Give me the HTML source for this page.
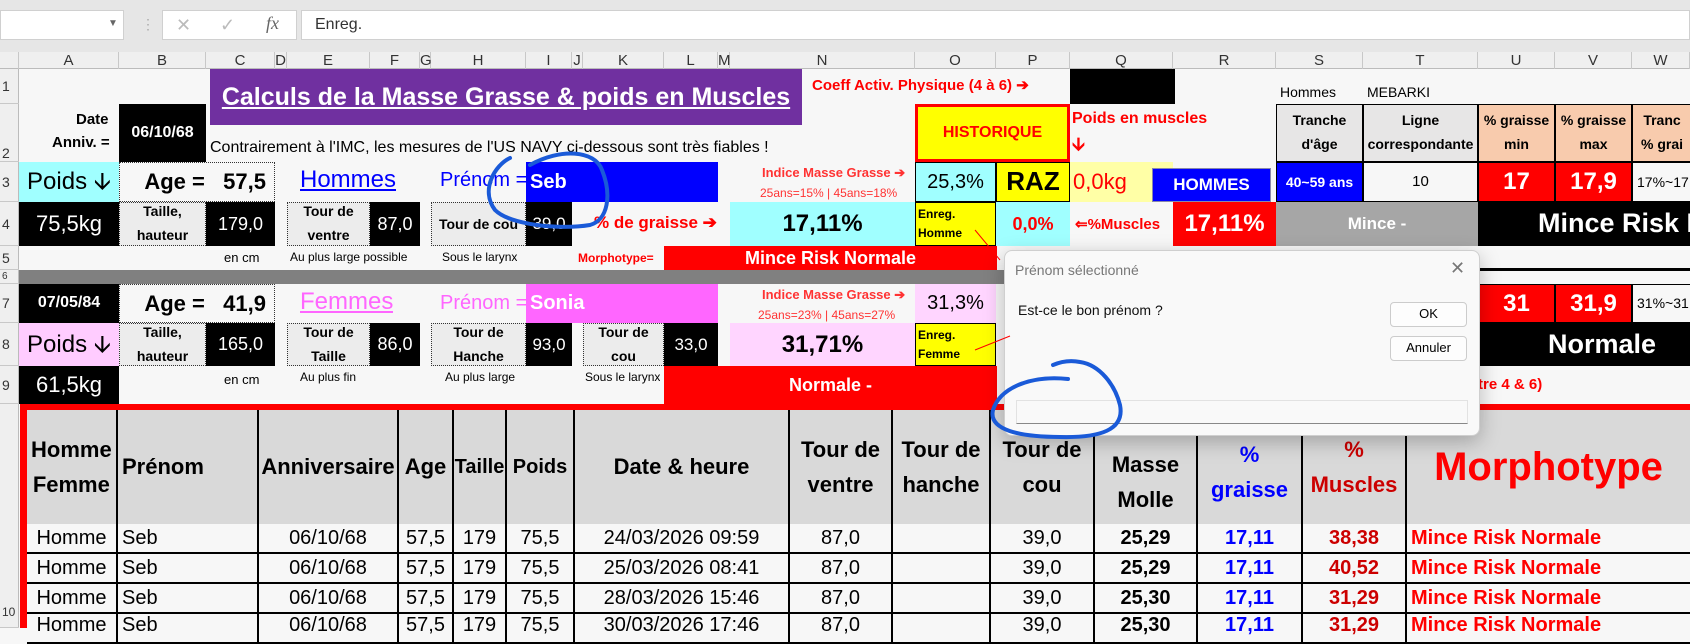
<!DOCTYPE html>
<html><head><meta charset="utf-8"><style>
*{margin:0;padding:0;box-sizing:border-box}
body{width:1690px;height:628px;overflow:hidden;background:#f7f7f7;font-family:"Liberation Sans",sans-serif;position:relative}
.a{position:absolute;white-space:nowrap;overflow:hidden}
.c{position:absolute;display:flex;align-items:center;justify-content:center;text-align:center;white-space:nowrap;overflow:hidden;line-height:1.15}
.b{font-weight:bold}
.ch{position:absolute;top:52px;height:17px;font-size:15px;color:#333;text-align:center;border-right:1px solid #c8c8c8;line-height:17px}
.rh{position:absolute;left:0;width:19px;font-size:14px;color:#333;border-bottom:1px solid #c8c8c8;display:flex;align-items:center;padding-left:2px}
.dot{border:1px dotted #333;background:#ececec}
.blk{background:#000;color:#fff}
.th{position:absolute;top:410px;height:114px;background:#d9d9d9;border-right:2px solid #000;display:flex;align-items:center;justify-content:center;text-align:center;font-weight:bold;font-size:22px;line-height:1.6}
.td{position:absolute;height:30px;border-right:2px solid #000;border-bottom:2px solid #000;font-size:20px;display:flex;align-items:center;justify-content:center;background:#f7f7f7}
</style></head><body>
<!-- top UI -->
<div class="a" style="left:0;top:0;width:1690px;height:52px;background:#e6e6e6"></div>
<div class="a" style="left:0;top:10px;width:124px;height:30px;background:#fff;border:1px solid #d0d0d0"></div>
<div class="a" style="left:108px;top:18px;font-size:10px;color:#666">▼</div>
<div class="a" style="left:141px;top:16px;font-size:14px;color:#aaa">⋮</div>
<div class="a" style="left:162px;top:10px;width:135px;height:30px;background:#fff;border:1px solid #d0d0d0"></div>
<div class="a" style="left:176px;top:15px;font-size:18px;color:#bbb">✕</div>
<div class="a" style="left:220px;top:15px;font-size:18px;color:#bbb">✓</div>
<div class="a" style="left:266px;top:13px;font-size:18px;color:#666;font-family:'Liberation Serif',serif;font-style:italic">fx</div>
<div class="a" style="left:301px;top:10px;width:1389px;height:30px;background:#fff;border:1px solid #d0d0d0"></div>
<div class="a" style="left:315px;top:16px;font-size:16px;color:#333">Enreg.</div>
<!-- column headers -->
<div class="a" style="left:0;top:52px;width:1690px;height:17px;background:#efefef;border-bottom:1px solid #bbb"></div>
<div class="ch" style="left:0;width:19px"></div>
<div class="ch" style="left:19px;width:100px">A</div><div class="ch" style="left:119px;width:87px">B</div>
<div class="ch" style="left:206px;width:69px">C</div><div class="ch" style="left:275px;width:12px">D</div>
<div class="ch" style="left:287px;width:83px">E</div><div class="ch" style="left:370px;width:50px">F</div>
<div class="ch" style="left:420px;width:11px">G</div><div class="ch" style="left:431px;width:95px">H</div>
<div class="ch" style="left:526px;width:46px">I</div><div class="ch" style="left:572px;width:11px">J</div>
<div class="ch" style="left:583px;width:81px">K</div><div class="ch" style="left:664px;width:54px">L</div>
<div class="ch" style="left:718px;width:12px">M</div><div class="ch" style="left:730px;width:185px">N</div>
<div class="ch" style="left:915px;width:81px">O</div><div class="ch" style="left:996px;width:74px">P</div>
<div class="ch" style="left:1070px;width:103px">Q</div><div class="ch" style="left:1173px;width:103px">R</div>
<div class="ch" style="left:1276px;width:87px">S</div><div class="ch" style="left:1363px;width:115px">T</div>
<div class="ch" style="left:1478px;width:77px">U</div><div class="ch" style="left:1555px;width:77px">V</div>
<div class="ch" style="left:1632px;width:58px">W</div>
<!-- row headers -->
<div class="a" style="left:0;top:69px;width:19px;height:559px;background:#efefef;border-right:1px solid #bbb"></div>
<div class="rh" style="top:69px;height:35px">1</div><div class="rh" style="top:104px;height:58px;align-items:flex-end">2</div>
<div class="rh" style="top:162px;height:40px">3</div><div class="rh" style="top:202px;height:44px">4</div>
<div class="rh" style="top:246px;height:24px">5</div><div class="rh" style="top:270px;height:14px;font-size:10px">6</div>
<div class="rh" style="top:284px;height:39px">7</div><div class="rh" style="top:323px;height:43px">8</div>
<div class="rh" style="top:366px;height:38px">9</div><div class="rh" style="top:404px;height:224px;align-items:flex-end;padding-bottom:8px;font-size:12px">10</div>

<!-- row 1-2 -->
<div class="c b" style="left:210px;top:69px;width:592px;height:56px;background:#7030a0;color:#fff;font-size:25px;text-decoration:underline">Calculs de la Masse Grasse &amp; poids en Muscles</div>
<div class="a b" style="left:812px;top:76px;font-size:15px;color:#f00">Coeff Activ. Physique (4 à 6) ➔</div>
<div class="a" style="left:1070px;top:69px;width:105px;height:35px;background:#000"></div>
<div class="a" style="left:1280px;top:84px;font-size:14px">Hommes</div>
<div class="a" style="left:1367px;top:84px;font-size:14px">MEBARKI</div>
<div class="a b" style="left:76px;top:111px;font-size:15px">Date</div>
<div class="a b" style="left:52px;top:134px;font-size:15px">Anniv. =</div>
<div class="c blk b" style="left:119px;top:104px;width:87px;height:58px;font-size:16px">06/10/68</div>
<div class="a" style="left:210px;top:139px;font-size:16px">Contrairement à l'IMC, les mesures de l'US NAVY ci-dessous sont très fiables !</div>
<div class="c b" style="left:915px;top:104px;width:155px;height:58px;background:#ff0;border:3px solid #f00;color:#f00;font-size:16px">HISTORIQUE</div>
<div class="a b" style="left:1072px;top:110px;font-size:16px;color:#f00">Poids en muscles</div>
<div class="a b" style="left:1072px;top:132px;font-size:18px;color:#f00">🡫</div>
<div class="c b" style="left:1276px;top:104px;width:87px;height:58px;background:#e7e6e6;border:1px solid #000;font-size:14px;white-space:normal;line-height:1.7">Tranche<br>d'âge</div>
<div class="c b" style="left:1363px;top:104px;width:115px;height:58px;background:#e7e6e6;border:1px solid #000;font-size:14px;line-height:1.7">Ligne<br>correspondante</div>
<div class="c b" style="left:1478px;top:104px;width:77px;height:58px;background:#f8cbad;border:1px solid #000;font-size:14px;line-height:1.7">% graisse<br>min</div>
<div class="c b" style="left:1555px;top:104px;width:77px;height:58px;background:#f8cbad;border:1px solid #000;font-size:14px;line-height:1.7">% graisse<br>max</div>
<div class="c b" style="left:1632px;top:104px;width:70px;height:58px;background:#f8cbad;border:1px solid #000;font-size:14px;line-height:1.7;justify-content:flex-start;padding-left:8px">Tranc<br>% grai</div>

<!-- row 3-5 hommes -->
<div class="c" style="left:19px;top:162px;width:100px;height:40px;background:#a0ffff;font-size:24px">Poids 🡫</div>
<div class="c dot b" style="left:119px;top:162px;width:156px;height:40px;background:#f7f7f7;font-size:22px;justify-content:flex-end;padding-right:8px">Age =&nbsp;&nbsp; 57,5</div>
<div class="a" style="left:300px;top:166px;font-size:24px;color:#00f;text-decoration:underline">Hommes</div>
<div class="a" style="left:440px;top:169px;font-size:20px;color:#00f">Prénom =</div>
<div class="c b" style="left:526px;top:162px;width:192px;height:40px;background:#00f;color:#fff;font-size:20px;justify-content:flex-start;padding-left:4px">Seb</div>
<div class="a b" style="left:762px;top:165px;font-size:13px;color:#f33">Indice Masse Grasse ➔</div>
<div class="a" style="left:760px;top:186px;font-size:12px;color:#f33">25ans=15% | 45ans=18%</div>
<div class="c" style="left:915px;top:162px;width:81px;height:40px;background:#a0ffff;border:1px solid #000;font-size:20px">25,3%</div>
<div class="c b" style="left:996px;top:162px;width:74px;height:40px;background:#ff0;border:1px solid #000;font-size:26px">RAZ</div>
<div class="c" style="left:1070px;top:162px;width:103px;height:40px;background:#ffffa6;color:#f00;font-size:22px;justify-content:flex-start;padding-left:3px">0,0kg</div>
<div class="c b" style="left:1152px;top:168px;width:119px;height:34px;background:#00f;color:#fff;font-size:17px;border:1px solid #88a">HOMMES</div>
<div class="c b" style="left:1276px;top:162px;width:87px;height:40px;background:#00f;color:#fff;font-size:14px;border:1px solid #000">40~59 ans</div>
<div class="c" style="left:1363px;top:162px;width:115px;height:40px;border:1px solid #000;font-size:15px">10</div>
<div class="c b" style="left:1478px;top:162px;width:77px;height:40px;background:#f00;color:#fff;font-size:24px;border:1px solid #000">17</div>
<div class="c b" style="left:1555px;top:162px;width:77px;height:40px;background:#f00;color:#fff;font-size:24px;border:1px solid #000">17,9</div>
<div class="c" style="left:1632px;top:162px;width:70px;height:40px;border:1px solid #000;font-size:14px;justify-content:flex-start;padding-left:4px">17%~17</div>

<div class="c blk" style="left:19px;top:202px;width:100px;height:44px;font-size:22px">75,5kg</div>
<div class="c dot b" style="left:119px;top:202px;width:87px;height:44px;font-size:14px;line-height:1.7">Taille,<br>hauteur</div>
<div class="c blk" style="left:206px;top:202px;width:69px;height:44px;font-size:18px">179,0</div>
<div class="c dot b" style="left:287px;top:202px;width:83px;height:44px;font-size:14px;line-height:1.7">Tour de<br>ventre</div>
<div class="c blk" style="left:370px;top:202px;width:50px;height:44px;font-size:18px">87,0</div>
<div class="c dot b" style="left:431px;top:202px;width:95px;height:44px;font-size:14px">Tour de cou</div>
<div class="c blk" style="left:526px;top:202px;width:46px;height:44px;font-size:17px">39,0</div>
<div class="a b" style="left:594px;top:213px;font-size:17px;color:#f00">% de graisse ➔</div>
<div class="c b" style="left:730px;top:202px;width:185px;height:44px;background:#a0ffff;font-size:24px">17,11%</div>
<div class="a b" style="left:915px;top:202px;width:81px;height:44px;background:#ff0;border:1px solid #000;font-size:12px;padding:2px;line-height:1.6">Enreg.<br>Homme</div>
<div class="c b" style="left:996px;top:202px;width:74px;height:44px;background:#a0ffff;color:#f00;font-size:18px">0,0%</div>
<div class="a b" style="left:1075px;top:215px;font-size:15px;color:#f00">⇐%Muscles</div>
<div class="c b" style="left:1173px;top:202px;width:103px;height:44px;background:#f00;color:#fff;font-size:24px">17,11%</div>
<div class="c b" style="left:1276px;top:202px;width:202px;height:44px;background:#a6a6a6;color:#fff;font-size:17px">Mince -</div>
<div class="c b" style="left:1478px;top:202px;width:212px;height:44px;background:#000;color:#fff;font-size:27px;justify-content:flex-start;padding-left:60px">Mince Risk N</div>

<div class="a" style="left:224px;top:250px;font-size:13px">en cm</div>
<div class="a" style="left:290px;top:250px;font-size:12px">Au plus large possible</div>
<div class="a" style="left:442px;top:250px;font-size:12px">Sous le larynx</div>
<div class="a b" style="left:578px;top:251px;font-size:12px;color:#f00">Morphotype=</div>
<div class="c b" style="left:664px;top:246px;width:333px;height:24px;background:#f00;color:#fff;font-size:18px">Mince Risk Normale</div>
<!-- row 6 -->
<div class="a" style="left:19px;top:270px;width:1460px;height:14px;background:#808080"></div>
<div class="a" style="left:1478px;top:268px;width:212px;height:3px;background:#000"></div>

<!-- row 7-9 femmes -->
<div class="c blk b" style="left:19px;top:284px;width:100px;height:39px;font-size:16px">07/05/84</div>
<div class="c dot b" style="left:119px;top:284px;width:156px;height:39px;background:#f7f7f7;font-size:22px;justify-content:flex-end;padding-right:8px">Age =&nbsp;&nbsp; 41,9</div>
<div class="a" style="left:300px;top:288px;font-size:24px;color:#f6f;text-decoration:underline">Femmes</div>
<div class="a" style="left:440px;top:292px;font-size:20px;color:#f6f">Prénom =</div>
<div class="c b" style="left:526px;top:284px;width:192px;height:39px;background:#f6f;color:#fff;font-size:20px;justify-content:flex-start;padding-left:4px">Sonia</div>
<div class="a b" style="left:762px;top:287px;font-size:13px;color:#f33">Indice Masse Grasse ➔</div>
<div class="a" style="left:758px;top:308px;font-size:12px;color:#f33">25ans=23% | 45ans=27%</div>
<div class="c" style="left:915px;top:284px;width:81px;height:39px;background:#ffd5ff;font-size:20px">31,3%</div>
<div class="c b" style="left:1478px;top:284px;width:77px;height:39px;background:#f00;color:#fff;font-size:24px;border:1px solid #000">31</div>
<div class="c b" style="left:1555px;top:284px;width:77px;height:39px;background:#f00;color:#fff;font-size:24px;border:1px solid #000">31,9</div>
<div class="c" style="left:1632px;top:284px;width:70px;height:39px;border:1px solid #000;font-size:14px;justify-content:flex-start;padding-left:4px">31%~31</div>

<div class="c" style="left:19px;top:323px;width:100px;height:43px;background:#ffccff;font-size:24px">Poids 🡫</div>
<div class="c dot b" style="left:119px;top:323px;width:87px;height:43px;font-size:14px;line-height:1.7">Taille,<br>hauteur</div>
<div class="c blk" style="left:206px;top:323px;width:69px;height:43px;font-size:18px">165,0</div>
<div class="c dot b" style="left:287px;top:323px;width:83px;height:43px;font-size:14px;line-height:1.7">Tour de<br>Taille</div>
<div class="c blk" style="left:370px;top:323px;width:50px;height:43px;font-size:18px">86,0</div>
<div class="c dot b" style="left:431px;top:323px;width:95px;height:43px;font-size:14px;line-height:1.7">Tour de<br>Hanche</div>
<div class="c blk" style="left:526px;top:323px;width:46px;height:43px;font-size:17px">93,0</div>
<div class="c dot b" style="left:583px;top:323px;width:81px;height:43px;font-size:14px;line-height:1.7">Tour de<br>cou</div>
<div class="c blk" style="left:664px;top:323px;width:54px;height:43px;font-size:17px">33,0</div>
<div class="c b" style="left:730px;top:323px;width:185px;height:43px;background:#ffd5ff;font-size:24px">31,71%</div>
<div class="a b" style="left:915px;top:323px;width:81px;height:43px;background:#ff0;border:1px solid #000;font-size:12px;padding:2px;line-height:1.6">Enreg.<br>Femme</div>
<div class="c b" style="left:1478px;top:323px;width:212px;height:43px;background:#000;color:#fff;font-size:27px;justify-content:flex-start;padding-left:70px">Normale</div>

<div class="c blk" style="left:19px;top:366px;width:100px;height:38px;font-size:22px">61,5kg</div>
<div class="a" style="left:224px;top:372px;font-size:13px">en cm</div>
<div class="a" style="left:300px;top:370px;font-size:12px">Au plus fin</div>
<div class="a" style="left:445px;top:370px;font-size:12px">Au plus large</div>
<div class="a" style="left:585px;top:370px;font-size:12px">Sous le larynx</div>
<div class="c b" style="left:664px;top:366px;width:333px;height:38px;background:#f00;color:#fff;font-size:18px">Normale -</div>
<div class="a b" style="left:1478px;top:376px;font-size:15px;color:#f00">tre 4 &amp; 6)</div>

<!-- table -->
<div class="a" style="left:20px;top:404px;width:1670px;height:224px;background:#f00"></div>
<div class="a" style="left:27px;top:410px;width:1663px;height:218px;background:#000"></div>
<div class="th" style="left:27px;width:91px;justify-content:flex-start;padding-left:4px;line-height:1.6">Homme<br>Femme</div>
<div class="th" style="left:118px;width:141px;justify-content:flex-start;padding-left:4px">Prénom</div>
<div class="th" style="left:259px;width:140px">Anniversaire</div>
<div class="th" style="left:399px;width:55px">Age</div>
<div class="th" style="left:454px;width:53px;font-size:20px">Taille</div>
<div class="th" style="left:507px;width:68px;font-size:20px">Poids</div>
<div class="th" style="left:575px;width:215px">Date &amp; heure</div>
<div class="th" style="left:790px;width:103px">Tour de<br>ventre</div>
<div class="th" style="left:893px;width:98px">Tour de<br>hanche</div>
<div class="th" style="left:991px;width:104px">Tour de<br>cou</div>
<div class="th" style="left:1095px;width:103px;padding-top:30px">Masse<br>Molle</div>
<div class="th" style="left:1198px;width:105px;color:#00f;padding-top:10px">%<br>graisse</div>
<div class="th" style="left:1303px;width:104px;color:#c00;padding-top:0">%<br>Muscles</div>
<div class="th" style="left:1407px;width:283px;color:#f00;font-size:40px;border-right:none">Morphotype</div>
<!-- data rows -->
<div id="rows"></div>
<script></script>
<!-- rows written statically -->
<div style="position:absolute;left:0;top:0">
</div>

<!-- row1 -->
<div class="td" style="left:27px;top:524px;width:91px">Homme</div><div class="td" style="left:118px;top:524px;width:141px;justify-content:flex-start;padding-left:4px">Seb</div><div class="td" style="left:259px;top:524px;width:140px">06/10/68</div><div class="td" style="left:399px;top:524px;width:55px">57,5</div><div class="td" style="left:454px;top:524px;width:53px">179</div><div class="td" style="left:507px;top:524px;width:68px">75,5</div><div class="td" style="left:575px;top:524px;width:215px">24/03/2026 09:59</div><div class="td" style="left:790px;top:524px;width:103px">87,0</div><div class="td" style="left:893px;top:524px;width:98px"></div><div class="td" style="left:991px;top:524px;width:104px">39,0</div><div class="td b" style="left:1095px;top:524px;width:103px">25,29</div><div class="td b" style="left:1198px;top:524px;width:105px;color:#00f">17,11</div><div class="td b" style="left:1303px;top:524px;width:104px;color:#c00">38,38</div><div class="td b" style="left:1407px;top:524px;width:283px;color:#f00;justify-content:flex-start;padding-left:4px;border-right:none">Mince Risk Normale</div>
<!-- row2 -->
<div class="td" style="left:27px;top:554px;width:91px">Homme</div><div class="td" style="left:118px;top:554px;width:141px;justify-content:flex-start;padding-left:4px">Seb</div><div class="td" style="left:259px;top:554px;width:140px">06/10/68</div><div class="td" style="left:399px;top:554px;width:55px">57,5</div><div class="td" style="left:454px;top:554px;width:53px">179</div><div class="td" style="left:507px;top:554px;width:68px">75,5</div><div class="td" style="left:575px;top:554px;width:215px">25/03/2026 08:41</div><div class="td" style="left:790px;top:554px;width:103px">87,0</div><div class="td" style="left:893px;top:554px;width:98px"></div><div class="td" style="left:991px;top:554px;width:104px">39,0</div><div class="td b" style="left:1095px;top:554px;width:103px">25,29</div><div class="td b" style="left:1198px;top:554px;width:105px;color:#00f">17,11</div><div class="td b" style="left:1303px;top:554px;width:104px;color:#c00">40,52</div><div class="td b" style="left:1407px;top:554px;width:283px;color:#f00;justify-content:flex-start;padding-left:4px;border-right:none">Mince Risk Normale</div>
<!-- row3 -->
<div class="td" style="left:27px;top:584px;width:91px">Homme</div><div class="td" style="left:118px;top:584px;width:141px;justify-content:flex-start;padding-left:4px">Seb</div><div class="td" style="left:259px;top:584px;width:140px">06/10/68</div><div class="td" style="left:399px;top:584px;width:55px">57,5</div><div class="td" style="left:454px;top:584px;width:53px">179</div><div class="td" style="left:507px;top:584px;width:68px">75,5</div><div class="td" style="left:575px;top:584px;width:215px">28/03/2026 15:46</div><div class="td" style="left:790px;top:584px;width:103px">87,0</div><div class="td" style="left:893px;top:584px;width:98px"></div><div class="td" style="left:991px;top:584px;width:104px">39,0</div><div class="td b" style="left:1095px;top:584px;width:103px">25,30</div><div class="td b" style="left:1198px;top:584px;width:105px;color:#00f">17,11</div><div class="td b" style="left:1303px;top:584px;width:104px;color:#c00">31,29</div><div class="td b" style="left:1407px;top:584px;width:283px;color:#f00;justify-content:flex-start;padding-left:4px;border-right:none">Mince Risk Normale</div>
<!-- row4 partial -->
<div class="td" style="left:27px;top:614px;width:91px;align-items:flex-start">Homme</div><div class="td" style="left:118px;top:614px;width:141px;justify-content:flex-start;padding-left:4px;align-items:flex-start">Seb</div><div class="td" style="left:259px;top:614px;width:140px;align-items:flex-start">06/10/68</div><div class="td" style="left:399px;top:614px;width:55px;align-items:flex-start">57,5</div><div class="td" style="left:454px;top:614px;width:53px;align-items:flex-start">179</div><div class="td" style="left:507px;top:614px;width:68px;align-items:flex-start">75,5</div><div class="td" style="left:575px;top:614px;width:215px;align-items:flex-start">30/03/2026 17:46</div><div class="td" style="left:790px;top:614px;width:103px;align-items:flex-start">87,0</div><div class="td" style="left:893px;top:614px;width:98px"></div><div class="td" style="left:991px;top:614px;width:104px;align-items:flex-start">39,0</div><div class="td b" style="left:1095px;top:614px;width:103px;align-items:flex-start">25,30</div><div class="td b" style="left:1198px;top:614px;width:105px;color:#00f;align-items:flex-start">17,11</div><div class="td b" style="left:1303px;top:614px;width:104px;color:#c00;align-items:flex-start">31,29</div><div class="td b" style="left:1407px;top:614px;width:283px;color:#f00;justify-content:flex-start;padding-left:4px;border-right:none;align-items:flex-start">Mince Risk Normale</div>

<!-- dialog -->
<div class="a" style="left:1004px;top:250px;width:476px;height:186px;background:#f9f9f9;border:1px solid #cfcfcf;border-radius:8px;box-shadow:0 6px 20px rgba(0,0,0,0.25)"></div>
<div class="a" style="left:1015px;top:262px;font-size:14px;color:#777">Prénom sélectionné</div>
<div class="a" style="left:1450px;top:258px;font-size:18px;color:#777">✕</div>
<div class="a" style="left:1018px;top:302px;font-size:14px;color:#111">Est-ce le bon prénom ?</div>
<div class="c" style="left:1390px;top:302px;width:77px;height:25px;background:#fdfdfd;border:1px solid #ccc;border-radius:4px;font-size:13px">OK</div>
<div class="c" style="left:1390px;top:336px;width:77px;height:25px;background:#fdfdfd;border:1px solid #ccc;border-radius:4px;font-size:13px">Annuler</div>
<div class="a" style="left:1016px;top:400px;width:452px;height:24px;background:#f9f9f9;border:1px solid #e2e2e2;border-bottom:1px solid #888"></div>

<!-- red arrows -->
<svg class="a" style="left:0;top:0" width="1690" height="628">
<line x1="1000" y1="260" x2="975" y2="230" stroke="#f00" stroke-width="1"/>
<line x1="1010" y1="336" x2="975" y2="350" stroke="#f00" stroke-width="1"/>
<path d="M530 165 C560 148 595 150 602 170 C612 195 608 220 590 225 C560 230 510 225 495 210 C480 190 495 165 510 158" fill="none" stroke="#1a5ad8" stroke-width="4" stroke-linecap="round"/>
<path d="M1068 379 C1030 375 1000 388 993 410 C988 430 1020 437 1060 437 C1100 438 1125 430 1120 405 C1115 385 1100 365 1080 362 C1070 360 1060 362 1053 365" fill="none" stroke="#1a5ad8" stroke-width="4" stroke-linecap="round"/>
</svg>
</body></html>
